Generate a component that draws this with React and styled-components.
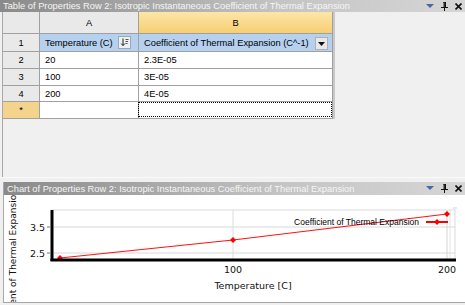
import React from 'react';
import styled, { createGlobalStyle } from 'styled-components';

const GlobalStyle = createGlobalStyle`
  html, body { margin: 0; padding: 0; }
  body {
    background: #f0f0f0;
    font-family: "Liberation Sans", Arial, sans-serif;
  }
`;

const Screen = styled.div`
  width: 465px;
  height: 305px;
  overflow: hidden;
  display: flex;
  flex-direction: column;
  background: #f0f0f0;
`;

const TopPanel = styled.div`
  height: 177px;
  display: flex;
  flex-direction: column;
  border-bottom: 1px solid #fafafa;
`;

const BottomPanel = styled.div`
  margin-top: 4px;
  margin-left: 3px;
  height: 120px;
  display: flex;
  flex-direction: column;
  border-bottom: 1px solid #a8a8a8;
  border-left: 1px solid #a8a8a8;
`;

const TitleBar = styled.div`
  height: ${p => p.$h}px;
  flex: none;
  display: flex;
  align-items: center;
  padding-left: ${p => p.$pad}px;
  padding-right: 3px;
  background: linear-gradient(to right, #8a8a8a 0%, #a6a6a6 30%, #c4c4c4 60%, #d6d6d6 100%);
  color: #f6f6f6;
  font-size: 9.3px;
  white-space: nowrap;
`;

const TitleText = styled.span`
  flex: 1;
  overflow: hidden;
`;

const TitleTools = styled.div`
  display: flex;
  align-items: center;
  gap: 7px;
  svg { display: block; }
`;

const TableArea = styled.div`
  flex: 1;
  margin-left: 2px;
  border-left: 1px solid #a8a8a8;
  display: flex;
`;

const Grid = styled.div`
  display: grid;
  grid-template-columns: 37px 99px 194px;
  grid-template-rows: 22px 18px 17px 17px 16px 17px;
  align-self: flex-start;
  border-right: 2px solid #c8c8c8;
  background: #ffffff;
`;

const Cell = styled.div`
  position: relative;
  display: flex;
  align-items: center;
  justify-content: ${p => (p.$center ? 'center' : 'flex-start')};
  padding-left: ${p => (p.$center ? 0 : 5)}px;
  font-size: 9.3px;
  color: #000;
  background: ${p => p.$bg || '#ffffff'};
  border-right: 1px solid #a0a0a0;
  border-bottom: 1px solid #a0a0a0;
  box-sizing: border-box;
  white-space: nowrap;
`;

const Focus = styled.div`
  position: absolute;
  inset: 0 0 1px -1px;
  border: 1px dotted #000;
`;

const SortButton = styled.div`
  position: absolute;
  right: 7px;
  top: 2px;
  width: 11px;
  height: 11px;
  border: 1px solid #9aa8b8;
  background: #eef0f2;
  display: flex;
  align-items: center;
  justify-content: center;
`;

const DropButton = styled.div`
  position: absolute;
  right: 4px;
  top: 3px;
  width: 11px;
  height: 11px;
  border: 1px solid #b0b0b0;
  background: #e8e8e8;
  display: flex;
  align-items: center;
  justify-content: center;
`;

const ChartBody = styled.div`
  flex: 1;
  background: #ffffff;
  overflow: hidden;
  svg { display: block; }
`;

const BLUE = '#b6d0ef';
const GREY = '#e9e9e9';
const ORANGE = 'linear-gradient(to bottom, #fce6a6, #f6cf74)';
const STAR = '#f4d48d';

function Tools() {
  return (
    <TitleTools>
      <svg width="8" height="5" viewBox="0 0 8 5"><path d="M0 0h8L4 4z" fill="#4a68a8" /></svg>
      <svg width="7" height="9" viewBox="0 0 7 9">
        <path d="M2 0h3v5h2v1H0V5h2z M3 6v3h1V6" fill="#111" />
        <path d="M2.7 0.5v4.5" stroke="#fff" strokeWidth="0.6" />
      </svg>
      <svg width="7" height="7" viewBox="0 0 7 7"><path d="M0.5 0.5l6 6M6.5 0.5l-6 6" stroke="#111" strokeWidth="1.6" /></svg>
    </TitleTools>
  );
}

function Chart() {
  const pts = [[56, 63], [229, 45], [443, 19]];
  const dia = (x, y) => `M${x} ${y - 3}L${x + 3} ${y}L${x} ${y + 3}L${x - 3} ${y}Z`;
  return (
    <svg width="462" height="107" viewBox="0 0 462 107">
      <rect x="48" y="15" width="403" height="50" fill="none" stroke="#dcdcdc" />
      <line x1="48" y1="32" x2="451" y2="32" stroke="#d8d8d8" />
      <line x1="48" y1="58" x2="451" y2="58" stroke="#d8d8d8" />
      <line x1="229" y1="15" x2="229" y2="65" stroke="#dcdcdc" />
      <line x1="443" y1="15" x2="443" y2="65" stroke="#d4d4d4" />
      <line x1="446" y1="15" x2="446" y2="65" stroke="#e4e4e4" />
      <line x1="449" y1="13" x2="453" y2="13" stroke="#c8cde6" />
      <polyline points={pts.map(p => p.join(',')).join(' ')} fill="none" stroke="#ff1010" strokeWidth="1" />
      {pts.map(([x, y]) => <path key={x} d={dia(x, y)} fill="#ff0000" />)}
      <line x1="48" y1="15" x2="48" y2="66" stroke="#000" strokeWidth="3" />
      <line x1="46.5" y1="65" x2="452" y2="65" stroke="#000" strokeWidth="3" />
      <line x1="43" y1="32" x2="47" y2="32" stroke="#777" />
      <line x1="43" y1="58" x2="47" y2="58" stroke="#777" />
      <g fontFamily="'DejaVu Sans', sans-serif" fontSize="9.5" fill="#111">
        <text x="41" y="35.5" textAnchor="end">3.5</text>
        <text x="41" y="61.5" textAnchor="end">2.5</text>
        <text x="229" y="78" textAnchor="middle">100</text>
        <text x="443" y="78" textAnchor="middle">200</text>
        <text x="249" y="94" textAnchor="middle">Temperature  [C]</text>
        <text x="0" y="0" fontSize="9" transform="translate(12 143) rotate(-90)">Coefficient of Thermal Expansion [C^-1]</text>
      </g>
      <text x="415" y="30" textAnchor="end" fontFamily="'Liberation Sans', Arial, sans-serif" fontSize="8.5" fill="#000">Coefficient of Thermal Expansion</text>
      <line x1="422" y1="27" x2="444" y2="27" stroke="#ff0000" strokeWidth="2" />
      <path d={dia(433, 27)} fill="#ff0000" />
    </svg>
  );
}

export default function App() {
  return (
    <Screen>
      <GlobalStyle />
      <TopPanel>
        <TitleBar $h={12} $pad={3}>
          <TitleText>Table of Properties Row 2: Isotropic Instantaneous Coefficient of Thermal Expansion</TitleText>
          <Tools />
        </TitleBar>
        <TableArea>
          <Grid>
            <Cell $center $bg={GREY} />
            <Cell $center $bg={GREY}>A</Cell>
            <Cell $center $bg={ORANGE}>B</Cell>

            <Cell $center $bg={GREY}>1</Cell>
            <Cell $bg={BLUE}>
              Temperature (C)
              <SortButton>
                <svg width="9" height="9" viewBox="0 0 9 9">
                  <path d="M3 0.5v7M1.2 5.6L3 7.6l1.8-2" stroke="#222" fill="none" strokeWidth="1" />
                  <path d="M5.5 1.5h3M5.5 3.5h2.5M5.5 5.5h2" stroke="#444" strokeWidth="0.9" />
                </svg>
              </SortButton>
            </Cell>
            <Cell $bg={BLUE}>
              Coefficient of Thermal Expansion (C^-1)
              <DropButton>
                <svg width="7" height="4" viewBox="0 0 7 4"><path d="M0 0h7L3.5 4z" fill="#111" /></svg>
              </DropButton>
            </Cell>

            <Cell $center $bg={GREY}>2</Cell>
            <Cell>20</Cell>
            <Cell>2.3E-05</Cell>

            <Cell $center $bg={GREY}>3</Cell>
            <Cell>100</Cell>
            <Cell>3E-05</Cell>

            <Cell $center $bg={GREY}>4</Cell>
            <Cell>200</Cell>
            <Cell>4E-05</Cell>

            <Cell $center $bg={STAR}>*</Cell>
            <Cell />
            <Cell><Focus /></Cell>
          </Grid>
        </TableArea>
      </TopPanel>
      <BottomPanel>
        <TitleBar $h={13} $pad={3}>
          <TitleText>Chart of Properties Row 2: Isotropic Instantaneous Coefficient of Thermal Expansion</TitleText>
          <Tools />
        </TitleBar>
        <ChartBody>
          <Chart />
        </ChartBody>
      </BottomPanel>
    </Screen>
  );
}
